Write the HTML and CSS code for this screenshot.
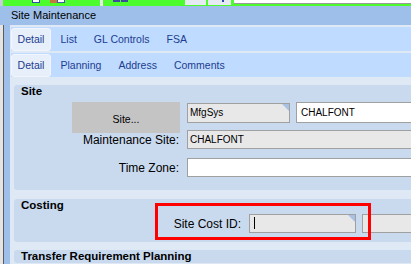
FILE: index.html
```html
<!DOCTYPE html>
<html lang="en">
<head>
    <meta charset="UTF-8">
    <title>Site Maintenance</title>
    <link rel="stylesheet" href="styles.css">
</head>
<body>
    <div class="toolbar">
        <span class="tb-grip"></span>
        <span class="tb-doc"></span>
        <span class="tb-pic"></span>
        <span class="tb-pic2"></span>
        <span class="tb-sep"></span>
        <span class="tb-dot"></span>
        <span class="tb-dot"></span>
        <span class="tb-box first"></span>
        <span class="tb-box second"><i></i></span>
        <span class="tb-field"></span>
    </div>

    <div class="titlebar">Site Maintenance</div>

    <div class="frame">
        <div class="rail"></div>
        <div class="main">
            <div class="tabrow">
                <div class="tab active">Detail</div>
                <div class="tab">List</div>
                <div class="tab">GL Controls</div>
                <div class="tab">FSA</div>
            </div>
            <div class="tabrow">
                <div class="tab active">Detail</div>
                <div class="tab">Planning</div>
                <div class="tab">Address</div>
                <div class="tab">Comments</div>
            </div>

            <div class="content">
                <div class="panel site">
                    <div class="panel-title">Site</div>
                    <div class="row first">
                        <div class="label"><button class="btn">Site...</button></div>
                        <div class="field gray corner short">MfgSys</div>
                        <div class="field white wide">CHALFONT</div>
                    </div>
                    <div class="row">
                        <div class="label">Maintenance Site:</div>
                        <div class="field gray long">CHALFONT</div>
                    </div>
                    <div class="row gap">
                        <div class="label">Time Zone:</div>
                        <div class="field white long"></div>
                    </div>
                </div>

                <div class="panel costing">
                    <div class="panel-title">Costing</div>
                    <div class="row">
                        <div class="label cost">Site Cost ID:</div>
                        <div class="field gray corner cost-id"><span class="caret"></span></div>
                        <div class="field gray next"></div>
                    </div>
                    <div class="highlight"></div>
                </div>

                <div class="panel">
                    <div class="panel-title">Transfer Requirement Planning</div>
                </div>
            </div>
        </div>
    </div>
</body>
</html>
```

FILE: styles.css
```css
* {
    margin: 0;
    padding: 0;
    box-sizing: border-box;
}

body {
    width: 411px;
    height: 264px;
    overflow: hidden;
    font-family: 'Liberation Sans', Arial, sans-serif;
    color: #000;
    background-color: #dfe9f6;
}

/* strip of the toolbar above, cut off by the screenshot */
.toolbar {
    display: flex;
    align-items: flex-start;
    height: 6px;
    background-color: #4dfc2c;
}

.toolbar span {
    flex-shrink: 0;
}

.tb-grip {
    width: 3px;
    height: 6px;
    background-color: #c8ccd8;
}

.tb-doc {
    margin-left: 29px;
    width: 8px;
    height: 3px;
    background-color: #fff;
    border: 1px solid #2f4fa8;
    border-top: none;
}

.tb-pic {
    margin-left: 10px;
    width: 7px;
    height: 3px;
    background-color: #c47a3a;
}

.tb-pic2 {
    width: 8px;
    height: 3px;
    background-color: #fff;
    border: 1px solid #3a5bb0;
    border-top: none;
}

.tb-sep {
    margin-left: 35px;
    width: 3px;
    height: 6px;
    background-color: #e8e8e8;
}

.tb-dot {
    width: 7px;
    height: 2px;
    margin-left: 1px;
    background-color: #3d4f9c;
}

.tb-sep + .tb-dot {
    margin-left: 10px;
}

.tb-box {
    height: 5px;
    background-color: #e6eaf2;
}

.tb-box.first {
    margin-left: 57px;
    width: 21px;
}

.tb-box.second {
    margin-left: 2px;
    width: 23px;
    padding-left: 14px;
}

.tb-box i {
    display: block;
    width: 2px;
    height: 2px;
    background-color: #2a48b0;
}

.toolbar .tb-field {
    margin-left: 3px;
    flex: 1;
    height: 4px;
    background-color: #fff;
    border-bottom: 1px solid #9a9a9a;
}

.titlebar {
    height: 19px;
    line-height: 19px;
    padding-left: 11px;
    font-size: 11px;
    background-color: #9dbfe9;
}

.frame {
    display: flex;
    height: 239px;
}

.rail {
    flex-shrink: 0;
    width: 10px;
    border-left: 3px solid #e4e4e4;
    background-color: #9dbfe9;
    box-shadow: inset 1px 0 #5c5c5c;
}

.main {
    flex: 1;
    min-width: 0;
    padding-left: 1px;
    overflow: hidden;
}

.tabrow {
    display: flex;
    align-items: center;
    height: 24px;
    margin-top: 2px;
    background-color: #bfdbff;
}

.tab {
    flex-shrink: 0;
    padding: 0 8.5px;
    font-size: 10.5px;
    line-height: 24px;
    color: #1d3d8f;
    white-space: nowrap;
}

.tab.active {
    width: 40px;
    height: 23px;
    padding: 0;
    margin-right: 1px;
    text-align: center;
    line-height: 21px;
    background-color: #e7effa;
    border: 1px solid #f2f6fc;
    border-radius: 3px;
}

.content {
    padding: 8px 0 0 3px;
    margin-right: -20px;
}

.panel {
    position: relative;
    background-color: #c9daef;
    border-radius: 3px;
}

.panel.site {
    padding-bottom: 13px;
    margin-bottom: 9px;
}

.panel.costing {
    padding-bottom: 9px;
    margin-bottom: 8px;
}

.panel-title {
    padding-left: 7px;
    font-size: 11.5px;
    font-weight: bold;
    line-height: 13px;
}

.row {
    display: flex;
    align-items: center;
}

.row > * {
    flex-shrink: 0;
}

.row.first {
    align-items: flex-start;
    margin-top: 4px;
}

.row.gap {
    margin-top: 9px;
}

.costing .row {
    margin-top: 2px;
}

.label {
    display: flex;
    justify-content: flex-end;
    width: 173px;
    padding-right: 8px;
    font-size: 12px;
    white-space: nowrap;
}

.label.cost {
    width: 235px;
}

.row.first .label {
    padding-right: 7px;
}

.btn {
    width: 108px;
    height: 31px;
    margin-bottom: -3px;
    padding-top: 2px;
    border: none;
    background-color: #c4c4c4;
    font-family: inherit;
    font-size: 10.5px;
    color: #000;
}

.field {
    position: relative;
    height: 19px;
    line-height: 17px;
    font-size: 10px;
    border: 1px solid #a0a0a0;
    white-space: nowrap;
}

.field.gray {
    padding-left: 2px;
    background-color: #e8e8e8;
}

.field.white {
    padding-left: 4px;
    background-color: #fff;
}

.field.short {
    width: 103px;
    height: 20px;
    margin-top: 1px;
    line-height: 18px;
}

.field.wide {
    width: 200px;
    height: 21px;
    margin-left: 6px;
    line-height: 19px;
}

.field.long {
    width: 260px;
}

.field.cost-id {
    width: 107px;
    padding-left: 4px;
}

.field.next {
    width: 80px;
    margin-left: 6px;
}

.field.corner::after {
    content: '';
    position: absolute;
    top: 0;
    right: 0;
    border-style: solid;
    border-width: 0 7px 7px 0;
    border-color: transparent #a9c2e3 transparent transparent;
}

.caret {
    display: inline-block;
    width: 1px;
    height: 12px;
    margin-top: 2px;
    vertical-align: top;
    background-color: #000;
}

/* red annotation frame drawn over the Site Cost ID row */
.highlight {
    position: absolute;
    left: 141px;
    top: 4px;
    width: 216px;
    height: 37px;
    border: 3px solid #ff0000;
}
```
